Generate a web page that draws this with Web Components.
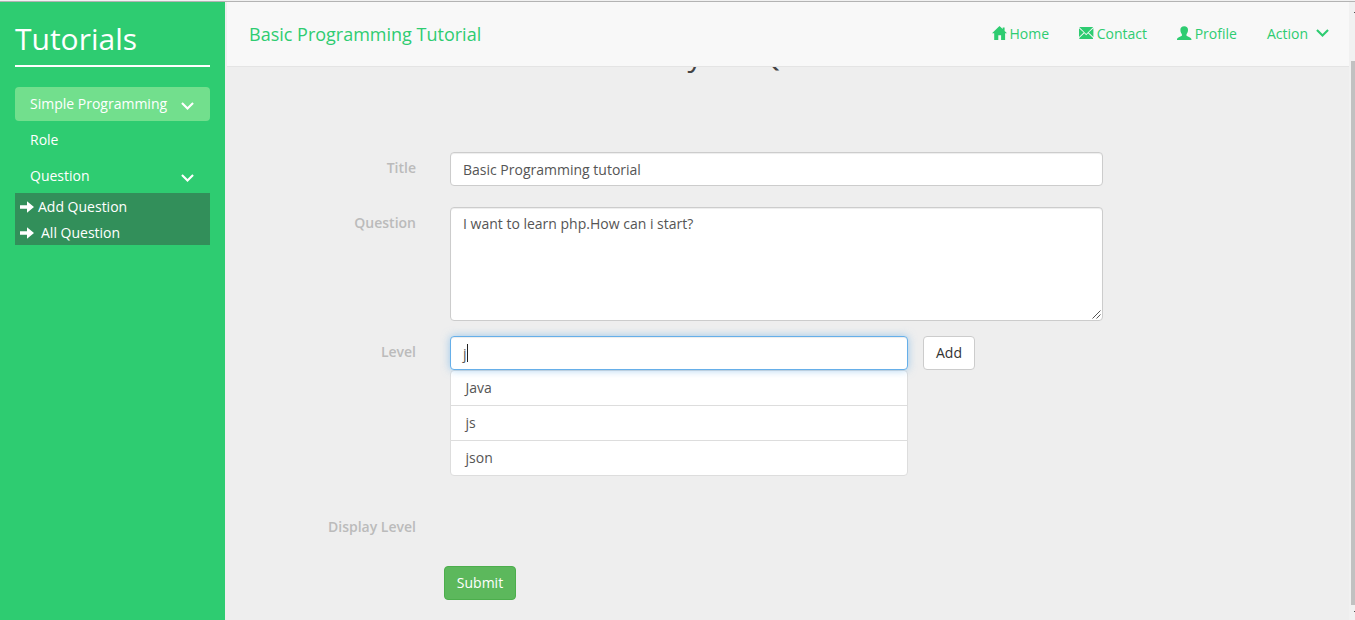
<!DOCTYPE html>
<html lang="en"><head><meta charset="utf-8"><title>Tutorials</title>
<style>
html,body{margin:0;height:100%;overflow:hidden;background:#eee}
body{font:14px/20px "Open Sans","Noto Sans",sans-serif;color:#555}
</style></head><body>
<tutorial-app></tutorial-app>
<script>
const define=(name,html)=>customElements.define(name,class extends HTMLElement{
  constructor(){super();const t=document.createElement('template');t.innerHTML=html;
    this.attachShadow({mode:'open'}).appendChild(t.content.cloneNode(true));}
});
const ICONS={
  home:'<path d="M7.5 0L0 7.3h2.2V14h4.1V9.2h2.8V14h4V7.3H15L12.6 5V1.4h-1.9V3.1Z"/>',
  mail:'<path d="M.2 1h14L7.2 8.1ZM0 2.3L4.7 6.5 0 11ZM14.4 2.3V11L9.7 6.5ZM5.3 7.3L7.2 9.2 9.1 7.3 14 12.1V13H.3V12.1Z"/>',
  user:'<path d="M7.2.2c2.4 0 3.8 1.2 3.8 3.6 0 2-.6 3.4-1.5 4.4v1.5c1.8 1 4.6 1.7 4.9 3.2V14H0v-1.1c.3-1.5 3.1-2.2 4.9-3.2V8.2C4 7.200 3.400 5.800 3.400 3.800 3.400 1.400 4.800.2 7.200.2Z"/>',
  down:'<path d="M.2 4.700L1.700 3.200 6.500 8 11.300 3.200 12.800 4.700 6.500 11Z"/>',
  right:'<path d="M0 5.200h7V1.200L14 7 7 12.800V8.800H0Z"/>'
};
customElements.define('ui-icon',class extends HTMLElement{
  connectedCallback(){if(!this.shadowRoot)this.attachShadow({mode:'open'}).innerHTML=
    `<style>:host{display:block;width:15px;height:14px;flex:none}svg{display:block;fill:currentColor}</style><svg width="15" height="14" viewBox="0 0 15 14">${ICONS[this.getAttribute('name')]}</svg>`;}
});
define('side-item',`<style>:host{display:flex;height:34px;margin-bottom:2px;padding:0 14px 0 15px;align-items:center;justify-content:space-between;border-radius:4px;color:#fff}
:host([active]){background:#72df8d}ui-icon{margin:3px 0 0}:host(:not([menu])) ui-icon{display:none}</style><span><slot></slot></span><ui-icon name="down"></ui-icon>`);
define('sub-item',`<style>:host{display:flex;height:26px;padding:1px 5px 0;box-sizing:border-box;align-items:center;gap:var(--gap,4px)}ui-icon{width:14px}</style><ui-icon name="right"></ui-icon><span><slot></slot></span>`);
define('side-bar',`<style>:host{display:block;width:195px;padding:0 15px;background:#2ecc71;color:#fff;flex:none}
h1{font-size:30px;font-weight:400;line-height:33px;margin:0 0 20px;padding:20px 0 10px;border-bottom:2px solid #fff}
.sub{background:#328f5a;margin-top:-2px}</style>
<h1>Tutorials</h1><side-item active menu>Simple Programming</side-item><side-item>Role</side-item><side-item menu>Question</side-item>
<div class="sub"><sub-item>Add Question</sub-item><sub-item style="--gap:7px">All Question</sub-item></div>`);
define('nav-link',`<style>:host{display:flex;align-items:center;gap:2.7px}::slotted(ui-icon){margin-bottom:2px}</style><slot></slot>`);
define('top-nav',`<style>:host{display:flex;position:relative;height:64px;margin-left:2px;border-bottom:1px solid #e4e4e4;background:#f8f8f8;color:#2ecc71;align-items:center;padding:0 18px 0 22px}
.brand{font-size:18px;flex:1}nav{display:flex;gap:30px}</style>
<span class="brand">Basic Programming Tutorial</span><nav><nav-link><ui-icon name="home"></ui-icon><span>Home</span></nav-link><nav-link><ui-icon name="mail"></ui-icon><span>Contact</span></nav-link><nav-link><ui-icon name="user"></ui-icon><span>Profile</span></nav-link><nav-link style="gap:8px"><span>Action</span><ui-icon name="down"></ui-icon></nav-link></nav>`);
define('form-row',`<style>:host{display:grid;grid-template-columns:191px 1fr;column-gap:34px;align-items:start}
label{font-weight:600;color:#bbb;text-align:right;padding-top:6px}</style><label><slot name="label"></slot></label><div><slot></slot></div>`);
define('text-field',`<style>:host{display:block;position:relative;box-sizing:border-box;width:653px;height:34px;border:1px solid #ccc;border-radius:4px;background:#fff;padding:7px 12px;line-height:20px;box-shadow:inset 0 1px 1px rgba(0,0,0,.075)}
:host([area]){height:114px;padding-top:6px}:host([focused]){width:458px;border-color:#66afe9;box-shadow:inset 0 1px 1px rgba(0,0,0,.075),0 0 8px rgba(102,175,233,.6)}
svg{display:none;position:absolute;right:1px;bottom:1px}:host([area]) svg{display:block}
i{display:none;width:1px;height:18px;background:#222;vertical-align:top;margin-top:0}:host([focused]) i{display:inline-block}</style><slot></slot><i></i><svg width="9" height="9" viewBox="0 0 9 9"><path d="M.5 8.500L8.500.5M4.500 8.500L8.500 4.500" stroke="#555" stroke-width="1"/></svg>`);
define('ui-button',`<style>:host{display:block;box-sizing:border-box;height:34px;width:52px;border:1px solid #ccc;border-radius:4px;background:#fff;color:#333;text-align:center;line-height:32px;flex:none}
:host([success]){width:72px;background:#5cb85c;border-color:#4cae4c;color:#fff}</style><slot></slot>`);
define('suggest-item',`<style>:host{display:block;box-sizing:border-box;height:36px;border:1px solid #ddd;background:#fff;padding:7px 15px 7px 14.5px;margin-bottom:-1px}:host(:first-of-type){border-radius:4px 4px 0 0}:host(:last-of-type){border-radius:0 0 4px 4px}</style><slot></slot>`);
define('question-form',`<style>:host{display:block}
h2{font-size:30px;line-height:33px;font-weight:400;margin:-29px 0 81px 399px;color:#444;white-space:nowrap}
.title{margin-bottom:21px}.area{margin-bottom:15px}.level{display:flex;gap:15px}.list{width:458px}.display{margin:36px 0 29px}ui-button[success]{margin-left:219px}</style>
<h2>Add your Question</h2>
<form-row class="title"><span slot="label">Title</span><text-field>Basic Programming tutorial</text-field></form-row>
<form-row class="area"><span slot="label">Question</span><text-field area>I want to learn php.How can i start?</text-field></form-row>
<form-row><span slot="label">Level</span><div class="level"><text-field focused>j</text-field><ui-button>Add</ui-button></div><div class="list"><suggest-item>Java</suggest-item><suggest-item>js</suggest-item><suggest-item>json</suggest-item></div></form-row>
<form-row class="display"><span slot="label">Display Level</span></form-row>
<ui-button success>Submit</ui-button>`);
define('scroll-rail',`<style>:host{display:flow-root;width:6px;box-sizing:border-box;padding-left:2px;background:#f1f1f1;flex:none}
.up,.dn{width:1px;height:1px;margin-left:3px;background:#505050}.up{margin-top:10px}.thumb{height:544px;margin-top:48px;background:#c1c1c1}.dn{margin-top:6px}</style><div class="up"></div><div class="thumb"></div><div class="dn"></div>`);
define('tutorial-app',`<style>:host{display:flex;height:620px;box-sizing:border-box;border-top:1px solid #f1f1f1;overflow:hidden}
.app{display:flex;flex:1;border-top:1px solid #b3b3b3}
main{flex:1;min-width:0}top-nav{z-index:1}</style>
<div class="app"><side-bar></side-bar><main><top-nav></top-nav><question-form></question-form></main><scroll-rail></scroll-rail></div>`);
</script></body></html>
